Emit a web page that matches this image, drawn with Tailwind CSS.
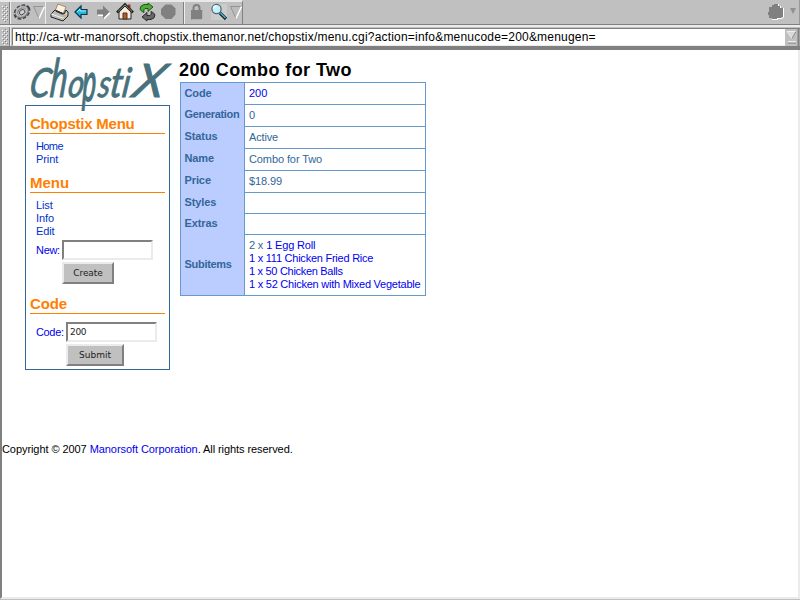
<!DOCTYPE html>
<html lang="en">
<head>
<meta charset="utf-8">
<title>200 Combo for Two</title>
<script src="https://cdn.jsdelivr.net/npm/@tailwindcss/browser@4"></script>
</head>
<body class="w-[800px] h-[600px] overflow-hidden bg-[#c0c0c0] font-['Liberation_Sans',Arial,sans-serif] text-[11px] leading-[13px] text-black flex flex-col">
<header class="shrink-0 h-[50px]">
  <div class="h-[25px] flex bg-[#c0c0c0] border-b border-[#808080]">
    <div class="w-[243px] h-full flex items-center bg-[#c0c0c0] border-t-2 border-t-[#e8e8e8] border-r border-r-[#808080]">
      <svg class="w-full h-[22px]" viewBox="0 2 242 22" shape-rendering="crispEdges">
        <defs>
          <pattern id="grip" width="4" height="4" patternUnits="userSpaceOnUse"><path d="M0 0h1v1H0zM2 2h1v1H2z" fill="#fff"/><path d="M1 1h1v1H1zM3 3h1v1H3z" fill="#808080"/></pattern>
        </defs>
        <rect x="2" y="5" width="6" height="17" fill="url(#grip)"/>
        <path d="M9.500 2v22M183.500 2v22" stroke="#808080"/><path d="M10.500 2v22M45.500 2v22M184.500 2v22" stroke="#eee"/>
        <g shape-rendering="auto">
          <g transform="rotate(-35 22 12)"><ellipse cx="22" cy="12" rx="7.800" ry="5.800" fill="none" stroke="#444" stroke-width="2.400" stroke-dasharray="3.400 1.600"/><ellipse cx="22" cy="12" rx="5.800" ry="4.400" fill="#c0c0c0" stroke="#777" stroke-width="3"/><ellipse cx="22" cy="11.400" rx="5.600" ry="4.200" fill="none" stroke="#bcbcc4" stroke-width="1.800"/><ellipse cx="22" cy="12.200" rx="3" ry="2.300" fill="#d0d0d0" stroke="#444" stroke-width=".9"/></g>
          <path d="M33.500 6.500h11l-5.500 12z" fill="#bcbcbc" stroke="#909090" stroke-width=".9"/><path d="M44.500 6.500l-5.500 12" stroke="#fff" stroke-width="1.500"/>
          <path d="M55 11l3-7 8 3-3 7z" fill="#fff1dc" stroke="#876" stroke-width=".8"/><path d="M51 14l4-4 9 4 2-4 2 2v4l-5 5-12-4z" fill="#bbb" stroke="#222"/><path d="M51 14l12 4 4-5" fill="none" stroke="#eee"/><path d="M56 11l7 3" stroke="#333" stroke-width="1.500"/><path d="M63 17l3-2" stroke="#da4" stroke-width="1.500"/>
          <path d="M75 12l6-6v3.500h6v5h-6V18z" fill="#22b7dd" stroke="#073652" stroke-width="1.200"/><path d="M77 12l3-3v2h6" fill="none" stroke="#9af0ff"/>
          <path d="M98 10.500h6V7l6.500 6.500-6.500 6V16h-6z" fill="#fff"/><path d="M97 9.500h6V5.500l6.500 6.500-6.500 6.500v-4h-6z" fill="#808080"/>
          <path d="M119 12v7h12v-7l-6-6z" fill="#f6eee4" stroke="#222"/><path d="M128 4.500h2.500V10L128 8z" fill="#a33"/><path d="M117 12.500l8-8 8 8" fill="none" stroke="#222" stroke-width="2.600"/><path d="M118 11.500l7-6.500 7 6.500" fill="none" stroke="#a97" stroke-width=".9"/><path d="M123 13h4v6h-4z" fill="#b65c1c" stroke="#532"/>
          <path d="M148 4.500h-4q-4 1-4 4.500 1 2.500 4 3.500-1-3 1-4h3v3l5-4.500-5-4z" fill="#4aad35" stroke="#174b12" stroke-width=".9"/><path d="M147 19.500h4q4-1 4-4.500-1-2.500-4-3.500 1 3-1 4h-3v-3l-5 4.500 5 4z" fill="#666" stroke="#222" stroke-width=".9"/>
          <path d="M165.500 4.500h6l4 4v6l-4 4.500h-6l-4.500-4.500V9z" fill="#808080"/>
          <path d="M193.500 11V8q0-3 3-3t3 3v3" fill="none" stroke="#808080" stroke-width="2"/><path d="M192 11h11v9h-11z" fill="#fff" opacity=".6"/><path d="M191 10h11.500v9.500H191z" fill="#808080"/>
          <rect x="211" y="4" width="16" height="16" fill="#ccc"/><path d="M220 13l6 6" stroke="#222" stroke-width="3.200"/><path d="M220.500 13l5 5" stroke="#3bd" stroke-width="1.400"/><circle cx="216.500" cy="9" r="4.600" fill="#c2f3fb" stroke="#567" stroke-width="1.300"/><path d="M213.500 9q0-3 3-3" fill="none" stroke="#fff" stroke-width="1.300"/>
          <path d="M230.500 6.500h11l-5.500 12z" fill="#bcbcbc" stroke="#909090" stroke-width=".9"/><path d="M241.500 6.500l-5.500 12" stroke="#fff" stroke-width="1.500"/>
        </g>
      </svg>
    </div>
    <div class="flex-1 flex justify-end">
      <svg class="w-[36px] h-[24px]" viewBox="764 0 36 24"><path d="M770 8h3V5h2V4h4v2h2v2h3v9l-2 2h-4v1h-6v-2h-3v-3h1z" fill="#fff"/><path d="M769 7h3V5h2V4h4v2h2v2h3v9l-2 1h-4v1h-5v-1h-3v-3h-1v-3h1z" fill="#808080"/><path d="M790 8h6l-3 6z" fill="#909090"/><path d="M799.500 0v24" stroke="#999"/></svg>
    </div>
  </div>
  <div class="h-[25px] flex bg-[#c0c0c0] border-t-2 border-[#ebebeb]">
    <div class="w-[12px] h-[23px] border-b-[4px] border-[#808080]"><svg class="w-[12px] h-[19px]" viewBox="0 27 12 19" shape-rendering="crispEdges"><rect x="2" y="29" width="6" height="16" fill="url(#grip)"/><path d="M9.500 27v19" stroke="#808080"/><path d="M10.500 27v19" stroke="#eee"/></svg></div>
    <div class="flex-1 h-[23px] border-b-[4px] border-[#808080] pt-px">
      <div class="h-[18px] flex bg-white border-t border-l border-t-[#808080] border-l-[#808080] border-b border-b-[#ebebeb]">
        <div class="flex-1 pl-[2px] text-[12px] leading-[17px] tracking-[0.2px] whitespace-nowrap">http://ca-wtr-manorsoft.chopstix.themanor.net/chopstix/menu.cgi?action=info&amp;menucode=200&amp;menugen=</div>
        <svg class="w-[15px] h-[17px]" viewBox="0 0 15 17"><path d="M0 0h15v17H0z" fill="#c0c0c0"/><path d="M2 2.500h9l-4 7z" fill="#d8d8d8" stroke="#eee"/><path d="M11 2.500l-4 7" stroke="#808080"/><path d="M3 12h8v2H3z" fill="#eee"/><path d="M3 14h8" stroke="#808080"/><path d="M13.500 0v17" stroke="#808080" stroke-width="2"/></svg>
      </div>
    </div>
  </div>
</header>
<main class="flex-1 bg-white border-l-2 border-l-[#808080] border-r-2 border-r-[#ebebeb] border-b-2 border-b-[#ebebeb] mb-px">
  <div class="flex h-[393px]">
    <aside class="relative ml-[23px] mt-[55px] w-[145px] h-[265px] border border-[#336699] px-[4px] text-[#0033cc]">
      <svg class="absolute left-[-1px] top-[-55px] w-[150px] h-[70px] overflow-visible" viewBox="25 50 150 70" fill="#47717b" stroke="#47717b" stroke-width=".9" font-family="Lato, sans-serif" font-style="italic">
        <text transform="translate(28 96) scale(.82 1) skewX(-12)" font-size="40">C</text>
        <text transform="translate(49 96) scale(.74 1.24) skewX(-10)" font-size="43">h</text>
        <text transform="translate(67 96) scale(.78 1) skewX(-10)" font-size="39">o</text>
        <text transform="translate(82 100) scale(.76 1.6) skewX(-4)" font-size="34">p</text>
        <text transform="translate(97 96) scale(.78 1) skewX(-12)" font-size="38">s</text>
        <text transform="translate(109 96) scale(.9 1.1) skewX(-10)" font-size="38">t</text>
        <text transform="translate(121 96) scale(.85 1.05) skewX(-10)" font-size="39">i</text>
        <text transform="translate(131 96) scale(1.08 1) skewX(-14)" font-size="46">X</text>
      </svg>
      <h2 class="h-[28px] pt-[9px] border-b border-[#ff7f00] text-[15px] leading-[18px] tracking-[-0.23px] font-bold text-[#ff7f00]">Chopstix Menu</h2>
      <nav class="flex flex-col pl-[6px] pt-[6px] h-[39px]"><a class="tracking-[-0.6px]">Home</a><a class="tracking-[-0.1px]">Print</a></nav>
      <h2 class="h-[20px] pt-px border-b border-[#ff7f00] text-[15px] leading-[18px] font-bold text-[#ff7f00]">Menu</h2>
      <nav class="flex flex-col pl-[6px] pt-[6px] h-[47px] tracking-[-0.1px]"><a>List</a><a>Info</a><a>Edit</a></nav>
      <form class="pl-[6px] h-[54px]">
        <div class="flex h-[22px]"><label class="w-[26px] pt-[4px] tracking-[-0.3px] text-[#0000ee]">New:</label><div class="w-[91px] h-[20px] bg-white border-2 border-t-[#808080] border-l-[#808080] border-r-[#ebebeb] border-b-[#ebebeb]"></div></div>
        <button class="ml-[26px] block w-[52px] h-[22px] bg-[#c0c0c0] border-2 border-t-[#ebebeb] border-l-[#ebebeb] border-r-[#808080] border-b-[#808080] font-['DejaVu_Sans',sans-serif] text-[9px] leading-[17px] tracking-[-0.1px] text-[#222]">Create</button>
      </form>
      <h2 class="h-[20px] pt-px border-b border-[#ff7f00] text-[15px] leading-[18px] tracking-[-0.15px] font-bold text-[#ff7f00]">Code</h2>
      <form class="pl-[6px] pt-[8px]">
        <div class="flex h-[22px]"><label class="w-[30px] pt-[4px] tracking-[-0.35px] text-[#0000ee]">Code:</label><div class="w-[91px] h-[20px] bg-white border-2 border-t-[#808080] border-l-[#808080] border-r-[#ebebeb] border-b-[#ebebeb] pl-[2px] font-['DejaVu_Sans',sans-serif] text-[9px] leading-[16px] tracking-[-0.3px] text-[#222]">200</div></div>
        <button class="ml-[30px] block w-[58px] h-[22px] bg-[#c0c0c0] border-2 border-t-[#ebebeb] border-l-[#ebebeb] border-r-[#808080] border-b-[#808080] font-['DejaVu_Sans',sans-serif] text-[9px] leading-[17px] text-[#222]">Submit</button>
      </form>
    </aside>
    <section class="ml-[10px] w-[246px]">
      <h1 class="-ml-px h-[32px] pt-[9px] text-[18px] leading-[22px] tracking-[0.42px] font-bold whitespace-nowrap">200 Combo for Two</h1>
      <div class="grid grid-cols-[63px_180px] grid-rows-[21px_21px_21px_21px_21px_20px_20px_60px] gap-px border border-[#6699cc] bg-[#6699cc] text-[#336699]">
        <div class="row-span-8 bg-[#bbccff] grid grid-rows-[21px_22px_22px_22px_22px_21px_21px_61px] pl-[3.5px] font-bold leading-[20px] tracking-[-0.1px]">
          <b>Code</b><b class="tracking-[-0.33px]">Generation</b><b>Status</b><b>Name</b><b>Price</b><b>Styles</b><b>Extras</b><b class="leading-[60px] tracking-[-0.3px]">Subitems</b>
        </div>
        <div class="bg-white pl-[4px] leading-[20px] text-[#0000ee]">200</div>
        <div class="bg-white pl-[4px] leading-[21px]">0</div>
        <div class="bg-white pl-[4px] leading-[21px] tracking-[-0.15px]">Active</div>
        <div class="bg-white pl-[4px] leading-[21px] tracking-[-0.1px]">Combo for Two</div>
        <div class="bg-white pl-[4px] leading-[21px] tracking-[-0.1px]">$18.99</div>
        <div class="bg-white"></div>
        <div class="bg-white"></div>
        <div class="bg-white pl-[4px] pt-[4px] tracking-[-0.24px] text-[#0000ee] whitespace-nowrap"><p class="tracking-[-0.15px]"><span class="text-[#336699]">2 x</span> 1 Egg Roll</p><p>1 x 111 Chicken Fried Rice</p><p class="tracking-[-0.3px]">1 x 50 Chicken Balls</p><p>1 x 52 Chicken with Mixed Vegetable</p></div>
      </div>
    </section>
  </div>
  <footer class="tracking-[-0.07px]">Copyright © 2007 <a class="text-[#0000ee]">Manorsoft Corporation</a>. All rights reserved.</footer>
</main>
</body>
</html>
